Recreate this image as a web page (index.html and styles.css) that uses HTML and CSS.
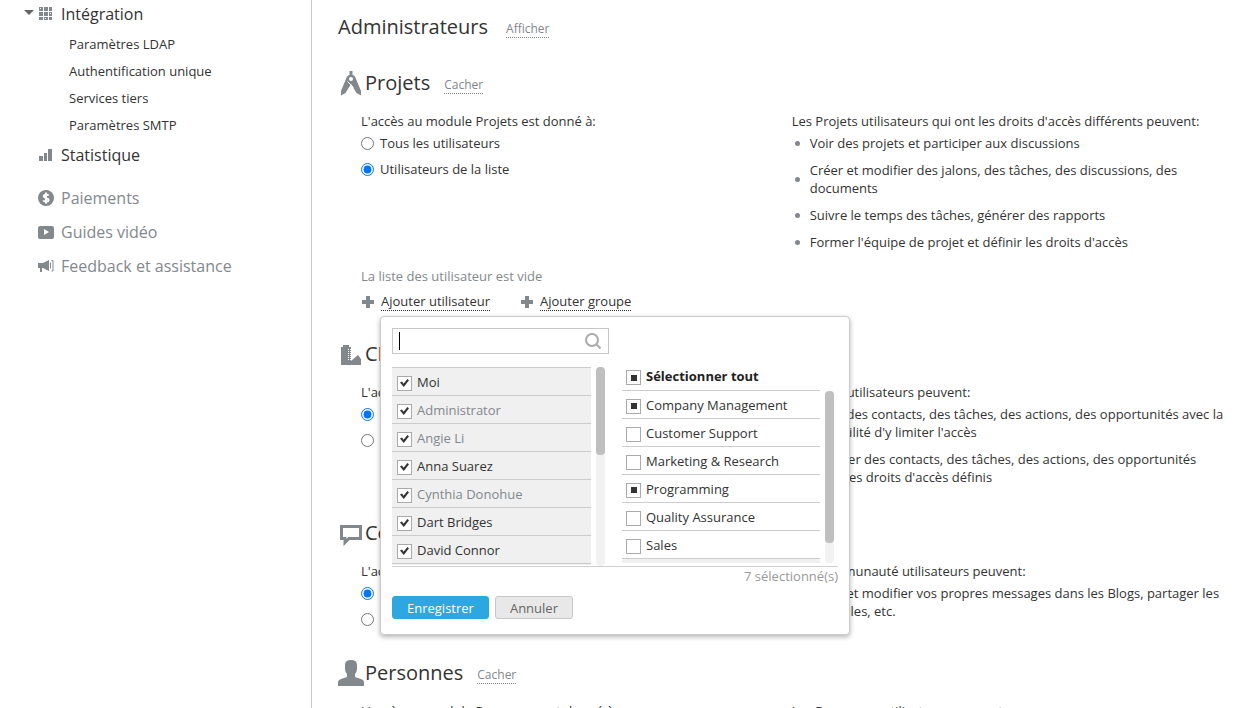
FILE: index.html
```html
<!DOCTYPE html>
<html lang="fr">
<head>
<meta charset="UTF-8" />
<meta name="viewport" content="width=device-width, initial-scale=1" />
<title>Droits d'accès</title>
<link rel="stylesheet" href="styles.css">
</head>
<body>
  <nav class="sidebar">
    <ul class="menu">
      <li class="menu-item">
        <span class="arrow"></span>
        <svg class="menu-icon" viewBox="0 0 16 16"><path d="M1 1h4v4H1zM6 1h4v4H6zM11 1h3v4h-3zM1 6h4v4H1zM6 6h4v4H6zM11 6h3v4h-3zM1 11h4v3H1zM6 11h4v3H6zM11 11h3v3h-3z"/><path class="hole" d="M2 2h1v1H2zM12 7h1v1h-1zM7 12h1v1H7z"/></svg>
        <a href="#">Intégration</a>
      </li>
      <li>
        <ul class="submenu">
          <li><a href="#">Paramètres LDAP</a></li>
          <li><a href="#">Authentification unique</a></li>
          <li><a href="#">Services tiers</a></li>
          <li><a href="#">Paramètres SMTP</a></li>
        </ul>
      </li>
      <li class="menu-item">
        <svg class="menu-icon" viewBox="0 0 16 16"><path d="M1 9h4v5H1zM6 6h3v8H6zM10 2h4v12h-4z"/></svg>
        <a href="#">Statistique</a>
      </li>
    </ul>
    <ul class="menu help">
      <li class="menu-item">
        <svg class="menu-icon" viewBox="0 0 16 16"><circle cx="8" cy="8" r="8"/><path class="line" d="M10.600 5.600C10 4.400 5.700 4 5.700 6.200C5.700 8.300 10.600 7.600 10.600 9.900C10.600 12.100 6 11.900 5.300 10.300M8 2.600v10.800"/></svg>
        <a href="#">Paiements</a>
      </li>
      <li class="menu-item">
        <svg class="menu-icon" viewBox="0 0 16 16"><rect x="0" y="2" width="16" height="13" rx="2"/><path class="hole" d="M6 5l5 3-5 3z"/></svg>
        <a href="#">Guides vidéo</a>
      </li>
      <li class="menu-item">
        <svg class="menu-icon" viewBox="0 0 16 16"><path d="M0 5h5l6-3v11l-6-3H4v4H2v-4H0z"/><path class="wave" d="M12.500 4.500v6M13.500 2.500h1.500v10.500h-1.500"/></svg>
        <a href="#">Feedback et assistance</a>
      </li>
    </ul>
  </nav>

  <main class="content">
    <section class="admins">
      <h2>Administrateurs</h2>
      <a href="#" class="toggle">Afficher</a>
    </section>

    <section>
      <header>
        <svg class="icon" viewBox="0 0 26 26"><path d="M11.500 1h3v4h-3zM9 6.500Q13 2.500 17 6.500L23 21v4.500L18.500 23 13 14 7.500 23 3 25.500V21z"/><circle class="hole" cx="13" cy="9" r="2"/><path class="line thin" d="M9.500 11.500l6 6"/></svg>
        <h2>Projets</h2>
        <a href="#" class="toggle">Cacher</a>
      </header>
      <div class="access">
        <div>
          <p>L'accès au module Projets est donné à:</p>
          <label class="radio"><input type="radio" name="projets"> Tous les utilisateurs</label>
          <label class="radio"><input type="radio" name="projets" checked> Utilisateurs de la liste</label>
        </div>
        <div>
          <p>Les Projets utilisateurs qui ont les droits d'accès différents peuvent:</p>
          <ul class="rights">
            <li>Voir des projets et participer aux discussions</li>
            <li>Créer et modifier des jalons, des tâches, des discussions, des documents</li>
            <li>Suivre le temps des tâches, générer des rapports</li>
            <li>Former l'équipe de projet et définir les droits d'accès</li>
          </ul>
        </div>
      </div>
      <div class="user-list">
        <p class="empty">La liste des utilisateur est vide</p>
        <div class="add-links">
          <a href="#"><svg class="plus" viewBox="0 0 12 12"><path d="M4 0h4v4h4v4H8v4H4V8H0V4h4z"/></svg><span>Ajouter utilisateur</span></a>
          <a href="#"><svg class="plus" viewBox="0 0 12 12"><path d="M4 0h4v4h4v4H8v4H4V8H0V4h4z"/></svg><span>Ajouter groupe</span></a>
        </div>

        <form class="popup" id="userSelector">
          <div class="search">
            <input type="text" id="search" aria-label="Rechercher" autocomplete="off">
            <span class="caret"></span>
            <svg viewBox="0 0 16 16"><circle cx="7" cy="7" r="6"/><path d="M11.500 11.500l4 4"/></svg>
          </div>
          <div class="columns">
            <div class="scroll-area">
              <div class="users">
                <label class="row"><input type="checkbox" checked> Moi</label>
                <label class="row muted"><input type="checkbox" checked> Administrator</label>
                <label class="row muted"><input type="checkbox" checked> Angie Li</label>
                <label class="row"><input type="checkbox" checked> Anna Suarez</label>
                <label class="row muted"><input type="checkbox" checked> Cynthia Donohue</label>
                <label class="row"><input type="checkbox" checked> Dart Bridges</label>
                <label class="row"><input type="checkbox" checked> David Connor</label>
              </div>
              <div class="track"><div class="thumb users-thumb"></div></div>
            </div>
            <div class="groups">
              <label class="row all"><input type="checkbox" class="partial"> Sélectionner tout</label>
              <div class="scroll-area">
                <div class="group-list">
                  <label class="row"><input type="checkbox" class="partial"> Company Management</label>
                  <label class="row"><input type="checkbox"> Customer Support</label>
                  <label class="row"><input type="checkbox"> Marketing &amp; Research</label>
                  <label class="row"><input type="checkbox" class="partial"> Programming</label>
                  <label class="row"><input type="checkbox"> Quality Assurance</label>
                  <label class="row"><input type="checkbox"> Sales</label>
                </div>
                <div class="track"><div class="thumb groups-thumb"></div></div>
              </div>
            </div>
          </div>
          <div class="count">7 sélectionné(s)</div>
          <div class="buttons">
            <button type="submit" class="primary">Enregistrer</button>
            <button type="button">Annuler</button>
          </div>
        </form>
      </div>
    </section>

    <section>
      <header>
        <svg class="icon" viewBox="0 0 26 26"><path d="M3 6h2V4h6v2h2v14l7-6 3 4v6H3z"/><path class="windows" d="M10.500 8v12M12.500 8v12"/></svg>
        <h2>CRM</h2>
        <a href="#" class="toggle">Cacher</a>
      </header>
      <div class="access">
        <div>
          <p>L'accès au module CRM est donné à:</p>
          <label class="radio"><input type="radio" name="crm" checked> Tous les utilisateurs</label>
          <label class="radio"><input type="radio" name="crm"> Utilisateurs de la liste</label>
        </div>
        <div>
          <p>Les CRM utilisateurs peuvent:</p>
          <ul class="rights">
            <li>Créer des contacts, des tâches, des actions, des opportunités avec la possibilité d'y limiter l'accès</li>
            <li>Modifier des contacts, des tâches, des actions, des opportunités selon les droits d'accès définis</li>
          </ul>
        </div>
      </div>
    </section>

    <section>
      <header>
        <svg class="icon" viewBox="0 0 26 26"><path class="bubble" d="M3.500 6.500h19v12H11l-4 4v-4H3.500z"/></svg>
        <h2>Communauté</h2>
        <a href="#" class="toggle">Cacher</a>
      </header>
      <div class="access">
        <div>
          <p>L'accès au module Communauté est donné à:</p>
          <label class="radio"><input type="radio" name="communaute" checked> Tous les utilisateurs</label>
          <label class="radio"><input type="radio" name="communaute"> Utilisateurs de la liste</label>
        </div>
        <div>
          <p>Les Communauté utilisateurs peuvent:</p>
          <ul class="rights">
            <li>Créer et modifier vos propres messages dans les Blogs, partager les nouvelles, etc.</li>
          </ul>
        </div>
      </div>
    </section>

    <section>
      <header>
        <svg class="icon" viewBox="0 0 26 26"><path d="M0 26v-4q0-2 3-3l6-2v-3q-2-2-2-5V5q0-5 6-5t6 5v4q0 3-2 5v3l6 2q3 1 3 3v4z"/></svg>
        <h2>Personnes</h2>
        <a href="#" class="toggle">Cacher</a>
      </header>
      <div class="access">
        <div>
          <p>L'accès au module Personnes est donné à:</p>
        </div>
        <div>
          <p>Les Personnes utilisateurs peuvent:</p>
        </div>
      </div>
    </section>
  </main>

<script>
  const search = document.getElementById('search');
  const form = document.getElementById('userSelector');

  document.querySelectorAll('.partial').forEach(box => {
    box.indeterminate = true;
  });

  search.addEventListener('input', () => {
    const text = search.value.toLowerCase();
    document.querySelectorAll('.users .row').forEach(row => {
      row.hidden = !row.textContent.toLowerCase().includes(text);
    });
  });

  form.addEventListener('submit', e => e.preventDefault());
</script>
</body>
</html>
```
FILE: styles.css
```css
* {
  box-sizing: border-box;
}
body {
  margin: 0;
  display: flex;
  height: 100vh;
  overflow: hidden;
  background: #fff;
  color: #333;
  font-family: 'Open Sans', 'Noto Sans', sans-serif;
  font-size: 13px;
  line-height: 18px;
}
ul {
  margin: 0;
  padding: 0;
  list-style: none;
}
p {
  margin: 0;
}
a {
  color: inherit;
  text-decoration: none;
}

/* Menu */
.sidebar {
  flex: none;
  width: 312px;
  padding-left: 24px;
  border-right: 1px solid #ccc;
}
.menu-item {
  display: flex;
  align-items: center;
  height: 28px;
  padding-left: 14px;
  font-size: 16px;
  position: relative;
}
.arrow {
  position: absolute;
  left: 0;
  top: 10px;
  border: 5px solid transparent;
  border-top-color: #666;
  border-bottom: 0;
}
.menu-icon {
  width: 16px;
  height: 16px;
  margin-right: 7px;
  fill: #83888d;
}
.hole {
  fill: #fff;
}
.line {
  fill: none;
  stroke: #fff;
  stroke-width: 2;
}
.thin {
  stroke-width: 1;
}
.wave {
  fill: none;
  stroke: #83888d;
}
.submenu {
  padding: 3px 0 2px 45px;
}
.submenu li {
  line-height: 27px;
}
.help {
  margin-top: 12px;
  color: #83888d;
}
.help .menu-item {
  height: 34px;
}

/* Contenu */
.content {
  flex: 1;
  min-width: 0;
  padding: 11px 0 0 26px;
}
section {
  margin-bottom: 25px;
}
section header, .admins {
  display: flex;
  align-items: center;
  height: 32px;
}
.admins {
  margin-bottom: 24px;
}
h2 {
  margin: 0 18px 0 0;
  font-size: 20px;
  font-weight: 400;
}
section header h2 {
  margin-right: 14px;
}
.icon {
  width: 26px;
  height: 26px;
  margin-right: 1px;
  fill: #83888d;
}
.windows {
  stroke: #fff;
  stroke-dasharray: 1 1;
}
.bubble {
  fill: none;
  stroke: #83888d;
  stroke-width: 3;
}
.toggle {
  margin-top: 4px;
  border-bottom: 1px dotted #83888d;
  color: #83888d;
  font-size: 12px;
  line-height: 16px;
}
.access {
  display: grid;
  grid-template-columns: 49fr 51fr;
  padding: 13px 0 0 23px;
}
.radio {
  display: flex;
  align-items: center;
  height: 26px;
}
.radio input {
  width: 13px;
  height: 13px;
  margin: 0 6px 0 0;
}
.rights {
  padding: 4px 10px 6px 3px;
}
.rights li {
  display: flex;
  align-items: center;
}
.rights li + li {
  margin-top: 9px;
}
.rights li::before {
  content: '';
  flex: none;
  width: 5px;
  height: 5px;
  margin-right: 10px;
  border-radius: 50%;
  background: #83888d;
}
.user-list {
  position: relative;
  padding: 10px 0 2px 23px;
}
.empty {
  color: #83888d;
}
.add-links {
  display: flex;
  gap: 31px;
  padding: 7px 0 0 1px;
}
.add-links a {
  display: flex;
  align-items: center;
}
.add-links span {
  border-bottom: 1px dotted #333;
}
.plus {
  width: 12px;
  height: 12px;
  margin-right: 7px;
  fill: #83888d;
}

/* Selection des utilisateurs */
.popup {
  position: absolute;
  left: 42px;
  top: 100%;
  z-index: 1;
  width: 470px;
  margin-top: 3px;
  padding: 11px;
  background: #fff;
  border: 1px solid #ccc;
  border-radius: 4px;
  box-shadow: 0 2px 5px rgba(0,0,0,0.3);
}
.search {
  position: relative;
  width: 217px;
}
.search input {
  display: block;
  width: 100%;
  height: 26px;
  padding: 0 28px 0 7px;
  border: 1px solid #c7c7c7;
  font: inherit;
  outline: none;
}
.search svg {
  position: absolute;
  right: 8px;
  top: 5px;
  width: 16px;
  height: 16px;
  fill: none;
  stroke: #aaa;
  stroke-width: 2;
}
.caret {
  position: absolute;
  left: 7px;
  top: 4px;
  width: 1px;
  height: 18px;
  background: #000;
}
.columns {
  display: flex;
  gap: 17px;
  height: 200px;
  margin-top: 13px;
  border-bottom: 1px solid #d0d0d0;
}
.scroll-area {
  display: flex;
  gap: 5px;
}
.users {
  width: 199px;
  height: 198px;
  overflow: hidden;
  background: #f0f0f0;
  border-top: 1px solid #ccc;
}
.row {
  display: flex;
  align-items: center;
  height: 28px;
  padding-left: 5px;
  border-bottom: 1px solid #ccc;
}
.row[hidden] {
  display: none;
}
.muted {
  color: #83888d;
}
.row input {
  appearance: none;
  flex: none;
  display: grid;
  place-items: center;
  width: 15px;
  height: 15px;
  margin: 3px 5px 0 0;
  background: #fff;
  border: 1px solid #aaa;
}
.row input:checked::after {
  content: '';
  width: 9px;
  height: 8px;
  background: #333;
  clip-path: polygon(0 45%, 22% 30%, 40% 60%, 82% 0, 100% 16%, 42% 100%);
}
.row input:indeterminate::after {
  content: '';
  width: 6px;
  height: 6px;
  background: #333;
}
.groups .row {
  width: 198px;
  padding-left: 4px;
}
.groups .all {
  height: 24px;
  padding-bottom: 5px;
  color: #222;
  font-weight: 700;
}
.group-list {
  height: 172px;
  overflow: hidden;
  background: linear-gradient(#fff 168px, #f0f0f0 168px);
}
.track {
  width: 9px;
  border-radius: 4px;
  background: #f2f2f2;
}
.thumb {
  border-radius: 4px;
  background: #bfbfbf;
}
.users-thumb {
  height: 88px;
}
.groups-thumb {
  height: 152px;
}
.count {
  color: #999;
  text-align: right;
}
.buttons {
  display: flex;
  gap: 6px;
  padding: 11px 0 4px;
}
button {
  height: 23px;
  padding: 0 14px;
  border: 1px solid #c7c7c7;
  border-radius: 3px;
  background: #e8e8e8;
  color: #666;
  font: inherit;
  line-height: 20px;
  cursor: pointer;
}
.primary {
  border-color: #2da7df;
  background: #2da7df;
  color: #fff;
}
```
